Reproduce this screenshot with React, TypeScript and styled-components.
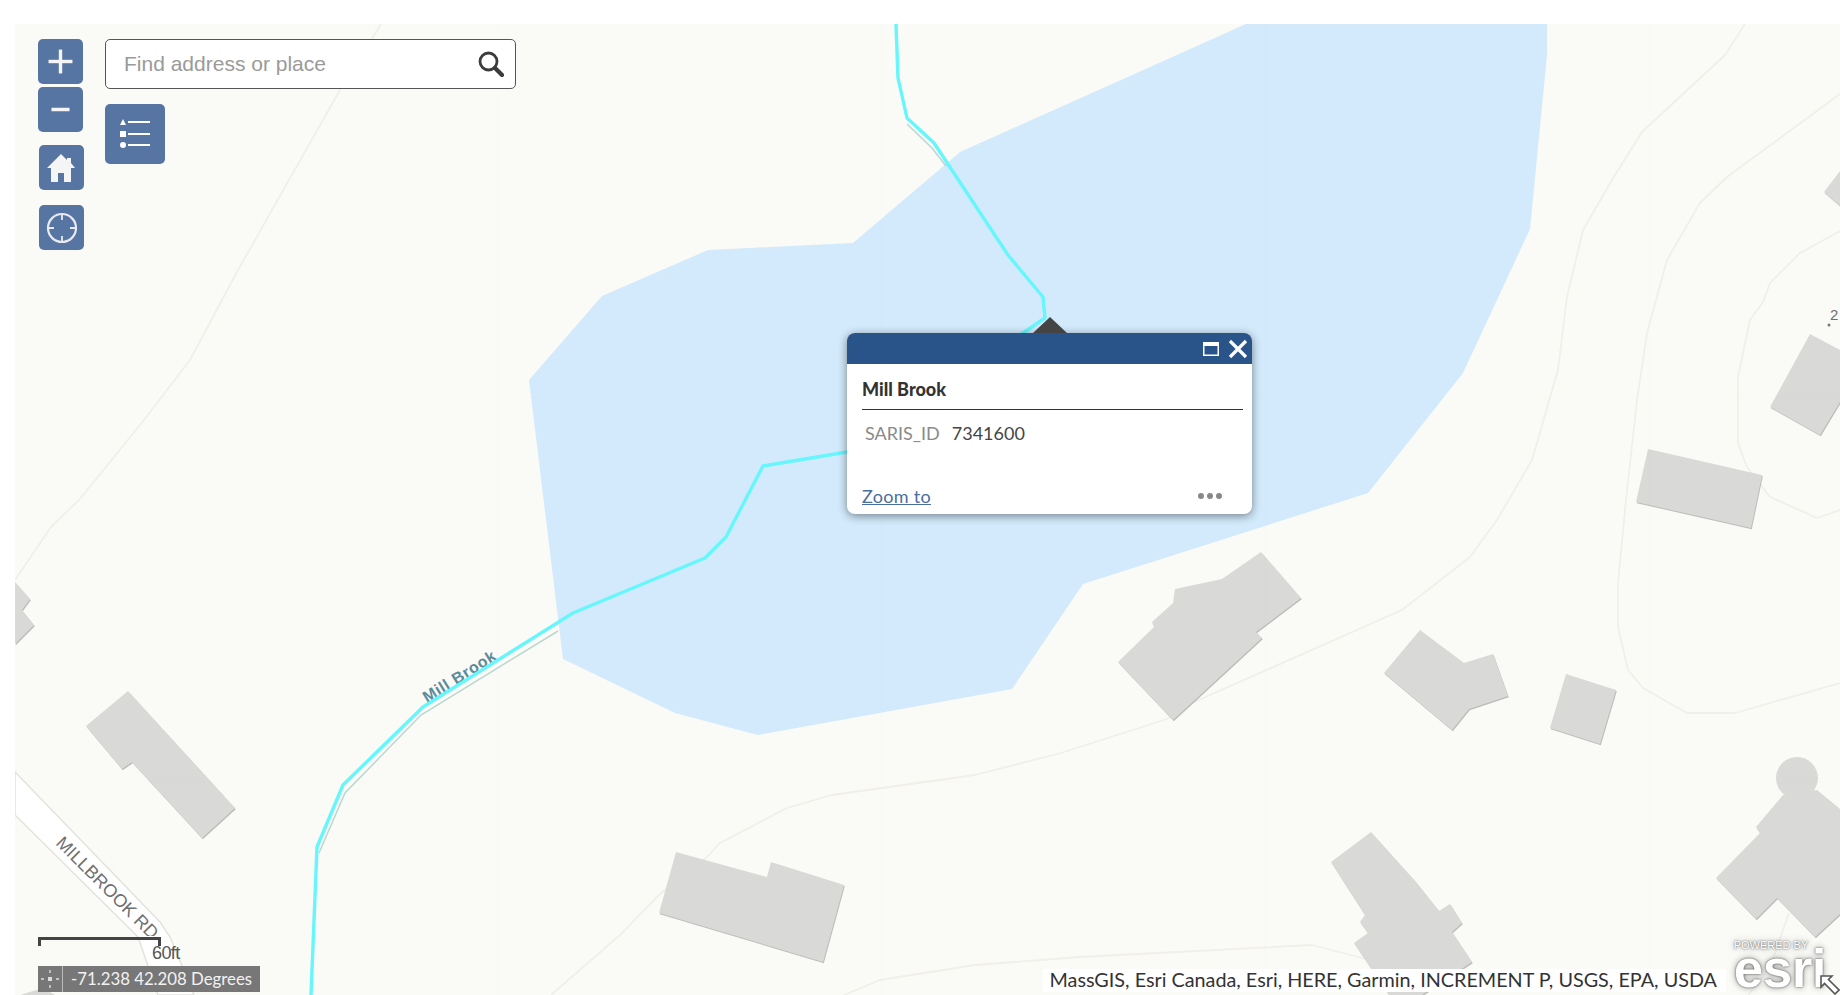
import React from "react";
import styled, { createGlobalStyle } from "styled-components";
import { Plus, Minus, X } from "lucide-react";

const GlobalStyle = createGlobalStyle`
  html, body, #root {
    margin: 0;
    height: 100%;
    background: #fff;
  }
  body {
    font-family: "Liberation Sans", Arial, sans-serif;
    overflow: hidden;
  }
`;

const pts = (list: number[][]) => list.map((p) => p.join(",")).join(" ");

const lake = [
  [1246, 24], [1547, 24], [1547, 55], [1530, 229], [1463, 373], [1368, 493], [1083, 584], [1012, 689],
  [758, 735], [675, 713], [563, 659], [529, 380], [602, 296], [708, 250], [853, 243], [960, 152],
];

const buildings = [
  [[128, 691], [235, 808], [202, 838], [132, 762], [122, 769], [86, 726]],
  [[15, 582], [30, 599], [22, 610], [34, 625], [15, 644]],
  [[1261, 552], [1301, 598], [1256, 632], [1262, 638], [1173, 720], [1118, 662], [1154, 627], [1152, 622], [1173, 603], [1175, 589], [1222, 579]],
  [[1420, 630], [1464, 663], [1493, 654], [1508, 696], [1469, 709], [1452, 730], [1384, 673]],
  [[1566, 674], [1616, 690], [1600, 744], [1550, 728]],
  [[1648, 449], [1762, 475], [1751, 528], [1636, 502]],
  [[1810, 334], [1840, 350], [1840, 402], [1820, 435], [1770, 407]],
  [[1840, 171], [1824, 192], [1840, 206]],
  [[1783, 795], [1756, 827], [1760, 833], [1716, 878], [1756, 919], [1777, 898], [1815, 937], [1840, 914], [1840, 809], [1817, 790]],
  [[1371, 832], [1416, 882], [1439, 911], [1450, 904], [1462, 923], [1452, 932], [1472, 962], [1422, 995], [1389, 995], [1354, 943], [1368, 933], [1360, 922], [1365, 915], [1331, 862]],
  [[676, 852], [767, 877], [771, 862], [844, 885], [823, 962], [659, 913]],
  [[20, 995], [43, 988], [55, 995]],
];

const contours = [
  [[381, 24], [340, 90], [238, 270], [190, 360], [140, 425], [79, 500], [51, 527], [15, 580]],
  [[1745, 24], [1725, 55], [1642, 132], [1612, 180], [1583, 230], [1567, 297], [1558, 370], [1532, 460], [1497, 520], [1470, 557], [1402, 610], [1192, 703], [1167, 719], [1061, 753], [975, 775], [832, 795], [787, 808], [720, 843], [706, 858], [661, 893], [620, 935], [551, 995]],
  [[1840, 94], [1727, 177], [1700, 203], [1667, 260], [1647, 333], [1637, 400], [1626, 500], [1618, 583], [1618, 627], [1628, 670], [1643, 688], [1687, 713], [1735, 713], [1840, 683]],
  [[1840, 231], [1800, 253], [1770, 283], [1763, 302], [1750, 320], [1738, 377], [1738, 443], [1747, 467], [1770, 497], [1817, 518], [1840, 510]],
  [[844, 995], [880, 980], [975, 965], [1080, 957], [1312, 945], [1370, 960]],
  [[1789, 913], [1770, 967], [1748, 995]],
];

const brook = [
  [896, 24], [898, 78], [907, 118], [934, 143], [1008, 255], [1043, 297], [1045, 318], [1023, 333],
  [847, 452], [763, 466], [726, 537], [705, 558], [573, 613], [423, 707], [343, 785], [317, 847], [311, 995],
];

const brookCasing = [
  [558, 631], [421, 715], [345, 793], [319, 853],
];

const brookCasingTop = [
  [907, 124], [932, 148], [946, 166],
];

const seams = { x: [112, 497, 881, 1265, 1649], y: [398, 782] };

const Page = styled.div`
  height: 100vh;
  box-sizing: border-box;
  padding: 24px 0 0 15px;
`;

const MapFrame = styled.main`
  position: relative;
  height: 100%;
  overflow: hidden;
  background: #fafaf7;
`;

const MapCanvas = styled.svg`
  display: block;
  width: 100%;
  height: 100%;
`;

const RoadLabel = styled.text`
  font-family: "Liberation Sans", Arial, sans-serif;
  font-size: 18px;
  fill: #6f6f6f;
`;

const BrookLabel = styled.text`
  font-family: "Liberation Sans", Arial, sans-serif;
  font-size: 16px;
  font-weight: 700;
  letter-spacing: 0.6px;
  fill: #5b8b99;
`;

const HouseNumber = styled.text`
  font-family: "Liberation Sans", Arial, sans-serif;
  font-size: 15px;
  fill: #6f6f6f;
`;

const TopLeft = styled.div`
  position: absolute;
  left: 23px;
  top: 15px;
  display: flex;
  gap: 21px;
  align-items: flex-start;
`;

const Tools = styled.div`
  display: flex;
  flex-direction: column;
`;

const ToolButton = styled.button<{ $gap?: number; $nudge?: number }>`
  width: 45px;
  height: 45px;
  margin: ${(p) => p.$gap ?? 0}px 0 0 ${(p) => p.$nudge ?? 0}px;
  padding: 0;
  display: flex;
  align-items: center;
  justify-content: center;
  border: 0;
  border-radius: 5px;
  background: #5675a2;
  color: #f5f5f5;
`;

const SearchColumn = styled.div`
  display: flex;
  flex-direction: column;
  gap: 15px;
`;

const SearchBox = styled.div`
  width: 411px;
  height: 50px;
  box-sizing: border-box;
  display: flex;
  align-items: center;
  justify-content: space-between;
  padding: 0 11px 0 18px;
  background: #fff;
  border: 1px solid #555;
  border-radius: 5px;
`;

const Placeholder = styled.span`
  font-size: 21px;
  color: #9a9a9a;
`;

const LegendButton = styled.button`
  width: 60px;
  height: 60px;
  padding: 0 0 5px;
  display: flex;
  align-items: center;
  justify-content: center;
  border: 0;
  border-radius: 5px;
  background: #5675a2;
`;

const Popup = styled.section`
  position: absolute;
  left: 832px;
  top: 309px;
  width: 405px;
  height: 181px;
  display: flex;
  flex-direction: column;
  background: #fff;
  border-radius: 8px;
  box-shadow: 0 2px 10px rgba(0, 0, 0, 0.45);
  font-family: Lato, "Liberation Sans", sans-serif;

  &::before {
    content: "";
    position: absolute;
    left: 186px;
    top: -16px;
    border-left: 17px solid transparent;
    border-right: 17px solid transparent;
    border-bottom: 16px solid #444;
  }
`;

const PopupHeader = styled.header`
  height: 31px;
  display: flex;
  align-items: center;
  justify-content: flex-end;
  gap: 3px;
  padding: 0;
  background: #28548a;
  border-radius: 8px 8px 0 0;
  color: #fff;

  svg:last-child {
    margin-right: -2px;
  }
`;

const PopupBody = styled.div`
  flex: 1;
  display: flex;
  flex-direction: column;
  padding: 0 9px 0 15px;
`;

const PopupTitle = styled.h2`
  margin: 0;
  padding: 14px 0 11px;
  height: 46px;
  box-sizing: border-box;
  border-bottom: 1px solid #333;
  font-size: 18px;
  line-height: 22px;
  font-weight: 900;
  color: #333;
`;

const FieldRow = styled.div`
  display: flex;
  gap: 12px;
  padding: 12px 0 0 3px;
  font-size: 18px;
  line-height: 22px;
`;

const FieldName = styled.span`
  color: #8a8a8a;
`;

const FieldValue = styled.span`
  color: #444;
`;

const PopupActions = styled.div`
  margin-top: auto;
  height: 29px;
  display: flex;
  align-items: flex-start;
  justify-content: space-between;
  padding-right: 21px;
`;

const ZoomLink = styled.a`
  font-size: 18px;
  line-height: 22px;
  letter-spacing: 0.3px;
  color: #4a6ea0;
  text-decoration: underline;
`;

const MoreDots = styled.span`
  display: flex;
  gap: 3px;
  padding-top: 8px;

  i {
    width: 6px;
    height: 6px;
    border-radius: 50%;
    background: #888;
  }
`;

const BottomLeft = styled.div`
  position: absolute;
  left: 23px;
  bottom: 3px;
  display: flex;
  flex-direction: column;
`;

const ScaleBar = styled.div`
  width: 117px;
  height: 6px;
  border: 3px solid #444;
  border-bottom: 0;
`;

const ScaleText = styled.span`
  align-self: flex-start;
  margin: -3px 0 2px 114px;
  font-family: "Liberation Sans", Arial, sans-serif;
  font-size: 18px;
  line-height: 21px;
  letter-spacing: -0.6px;
  color: #555;
`;

const CoordBar = styled.div`
  width: 222px;
  height: 26px;
  display: flex;
  align-items: center;
  background: #777;
  color: #f2f2f2;
`;

const CoordIcon = styled.span`
  width: 24px;
  height: 100%;
  display: flex;
  align-items: center;
  justify-content: center;
  border-right: 1px solid #bbb;
`;

const CoordText = styled.span`
  padding: 0 0 2px 8px;
  font-family: Lato, "Liberation Sans", sans-serif;
  font-size: 16.8px;
`;

const Attribution = styled.div`
  position: absolute;
  right: 114px;
  bottom: 3px;
  height: 23px;
  box-sizing: border-box;
  display: flex;
  align-items: center;
  padding: 0 9px 3px 7px;
  background: #fff;
  font-family: Lato, "Liberation Sans", sans-serif;
  font-size: 19.8px;
  color: #333;
`;

const EsriLogo = styled.div`
  position: absolute;
  right: 14px;
  bottom: 8px;
  display: flex;
  flex-direction: column;
  align-items: flex-start;
  gap: 1px;
  color: #fff;
  text-shadow: 0 0 2px rgba(0, 0, 0, 0.7), 0 0 7px rgba(0, 0, 0, 0.4);
`;

const PoweredBy = styled.span`
  font-size: 11px;
  line-height: 10px;
`;

const EsriWord = styled.span`
  font-size: 53px;
  line-height: 36px;
  font-weight: 700;
  letter-spacing: -0.5px;
`;

const CursorIcon = styled.svg`
  position: absolute;
  right: 0;
  bottom: 0;
`;

const HomeIcon = () => (
  <svg width="30" height="30" viewBox="0 0 30 30" fill="#f5f5f5">
    <path d="M14 1 0 15h4v14h7v-9h6v9h7V15h4l-4-5V5h-4v2z" />
  </svg>
);

const LocateIcon = () => (
  <svg width="32" height="32" viewBox="0 0 32 32" fill="none" stroke="#e8eaf0" strokeWidth="2.2">
    <circle cx="16" cy="16" r="14" />
    <path d="M16 3v5M16 24v5M3 16h5M24 16h5" strokeWidth="1.8" />
  </svg>
);

const SearchIcon = () => (
  <svg width="26" height="26" viewBox="0 0 26 26" fill="none" stroke="#3c3c3c">
    <circle cx="10.5" cy="10.5" r="8.5" strokeWidth="2.8" />
    <path d="M17 17l7 7" strokeWidth="4.2" strokeLinecap="round" />
  </svg>
);

const LegendIcon = () => (
  <svg width="32" height="32" viewBox="0 0 32 32" fill="#fff" stroke="none">
    <path d="M1 9 4 3l3 6z" />
    <rect x="1" y="15" width="6" height="6" />
    <circle cx="4" cy="29" r="3" />
    <path d="M9 5h22v2H9zM9 17h22v2H9zM9 28h22v2H9z" />
  </svg>
);

const MaximizeIcon = () => (
  <svg width="16" height="14" viewBox="0 0 16 14" fill="none" stroke="#fff">
    <rect x="0.75" y="0.75" width="14.5" height="12.5" strokeWidth="1.5" />
    <path d="M0 2.5h16" strokeWidth="3" />
  </svg>
);

const CrosshairIcon = () => (
  <svg width="18" height="18" viewBox="0 0 18 18" fill="none" stroke="#ddd" strokeWidth="1.4">
    <rect x="7" y="7" width="4" height="4" fill="#ddd" stroke="none" />
    <path d="M9 0v3M9 15v3M0 9h3M15 9h3" />
  </svg>
);

const App = () => (
  <Page>
    <GlobalStyle />
    <MapFrame>
      <MapCanvas viewBox="15 24 1825 971" preserveAspectRatio="xMinYMin slice">
        <defs>
          <clipPath id="road-clip">
            <rect x="15" y="760" width="146" height="176" />
          </clipPath>
        </defs>
        <polygon points={pts([[15, 772], [160, 922], [170, 937], [194, 995], [158, 995], [138, 937], [15, 815]])} fill="#fff" stroke="#e3e3de" strokeWidth="1.5" />
        {contours.map((line, i) => (
          <polyline key={i} points={pts(line)} fill="none" stroke="#f0efe9" strokeWidth="1.8" strokeLinejoin="round" />
        ))}
        <polygon points={pts(lake)} fill="#d2eafc" />
        {buildings.map((shape, i) => (
          <g key={i}>
            <polygon points={pts(shape)} transform="translate(0.8 1.2)" fill="#bdbdbb" />
            <polygon points={pts(shape)} fill="#d9d9d8" />
          </g>
        ))}
        <circle cx="1797" cy="778" r="21" fill="#d9d9d8" />
        {seams.x.map((x) => (
          <path key={x} d={`M${x} 24V995`} stroke="rgba(110,110,90,0.02)" />
        ))}
        {seams.y.map((y) => (
          <path key={y} d={`M15 ${y}H1840`} stroke="rgba(110,110,90,0.02)" />
        ))}
        <polyline points={pts(brookCasing)} fill="none" stroke="#bcd6d0" strokeWidth="1.5" />
        <polyline points={pts(brookCasingTop)} fill="none" stroke="#bcd6d0" strokeWidth="1.5" />
        <BrookLabel x="0" y="0" transform="translate(427 703) rotate(-32)">Mill Brook</BrookLabel>
        <polyline points={pts(brook)} fill="none" stroke="#66f6fb" strokeWidth="3.4" strokeLinejoin="round" />
        <g clipPath="url(#road-clip)">
          <RoadLabel x="0" y="0" transform="translate(55 844) rotate(45)">MILLBROOK RD</RoadLabel>
        </g>
        <HouseNumber x="1830" y="320">2</HouseNumber>
        <circle cx="1829" cy="325" r="1.5" fill="#777" />
      </MapCanvas>

      <TopLeft>
        <Tools>
          <ToolButton aria-label="Zoom in">
            <Plus size={41} strokeWidth={2} strokeLinecap="butt" />
          </ToolButton>
          <ToolButton aria-label="Zoom out" $gap={3}>
            <Minus size={31} strokeWidth={2.7} strokeLinecap="butt" />
          </ToolButton>
          <ToolButton aria-label="Home" $gap={13} $nudge={1}>
            <HomeIcon />
          </ToolButton>
          <ToolButton aria-label="Locate" $gap={15} $nudge={1}>
            <LocateIcon />
          </ToolButton>
        </Tools>
        <SearchColumn>
          <SearchBox>
            <Placeholder>Find address or place</Placeholder>
            <SearchIcon />
          </SearchBox>
          <LegendButton aria-label="Legend">
            <LegendIcon />
          </LegendButton>
        </SearchColumn>
      </TopLeft>

      <Popup>
        <PopupHeader>
          <MaximizeIcon />
          <X size={32} strokeWidth={2.4} strokeLinecap="butt" />
        </PopupHeader>
        <PopupBody>
          <PopupTitle>Mill Brook</PopupTitle>
          <FieldRow>
            <FieldName>SARIS_ID</FieldName>
            <FieldValue>7341600</FieldValue>
          </FieldRow>
          <PopupActions>
            <ZoomLink>Zoom to</ZoomLink>
            <MoreDots>
              <i />
              <i />
              <i />
            </MoreDots>
          </PopupActions>
        </PopupBody>
      </Popup>

      <BottomLeft>
        <ScaleBar />
        <ScaleText>60ft</ScaleText>
        <CoordBar>
          <CoordIcon>
            <CrosshairIcon />
          </CoordIcon>
          <CoordText>-71.238 42.208 Degrees</CoordText>
        </CoordBar>
      </BottomLeft>

      <Attribution>MassGIS, Esri Canada, Esri, HERE, Garmin, INCREMENT P, USGS, EPA, USDA</Attribution>

      <EsriLogo>
        <PoweredBy>POWERED BY</PoweredBy>
        <EsriWord>esri</EsriWord>
      </EsriLogo>
      <CursorIcon width="20" height="20" viewBox="0 0 20 20">
        <path d="M1 1h11l-3.500 3.500L19 15l-4 4L4.500 8.500 1 12z" fill="#fff" stroke="#555" strokeWidth="1.6" />
      </CursorIcon>
    </MapFrame>
  </Page>
);

export default App;
